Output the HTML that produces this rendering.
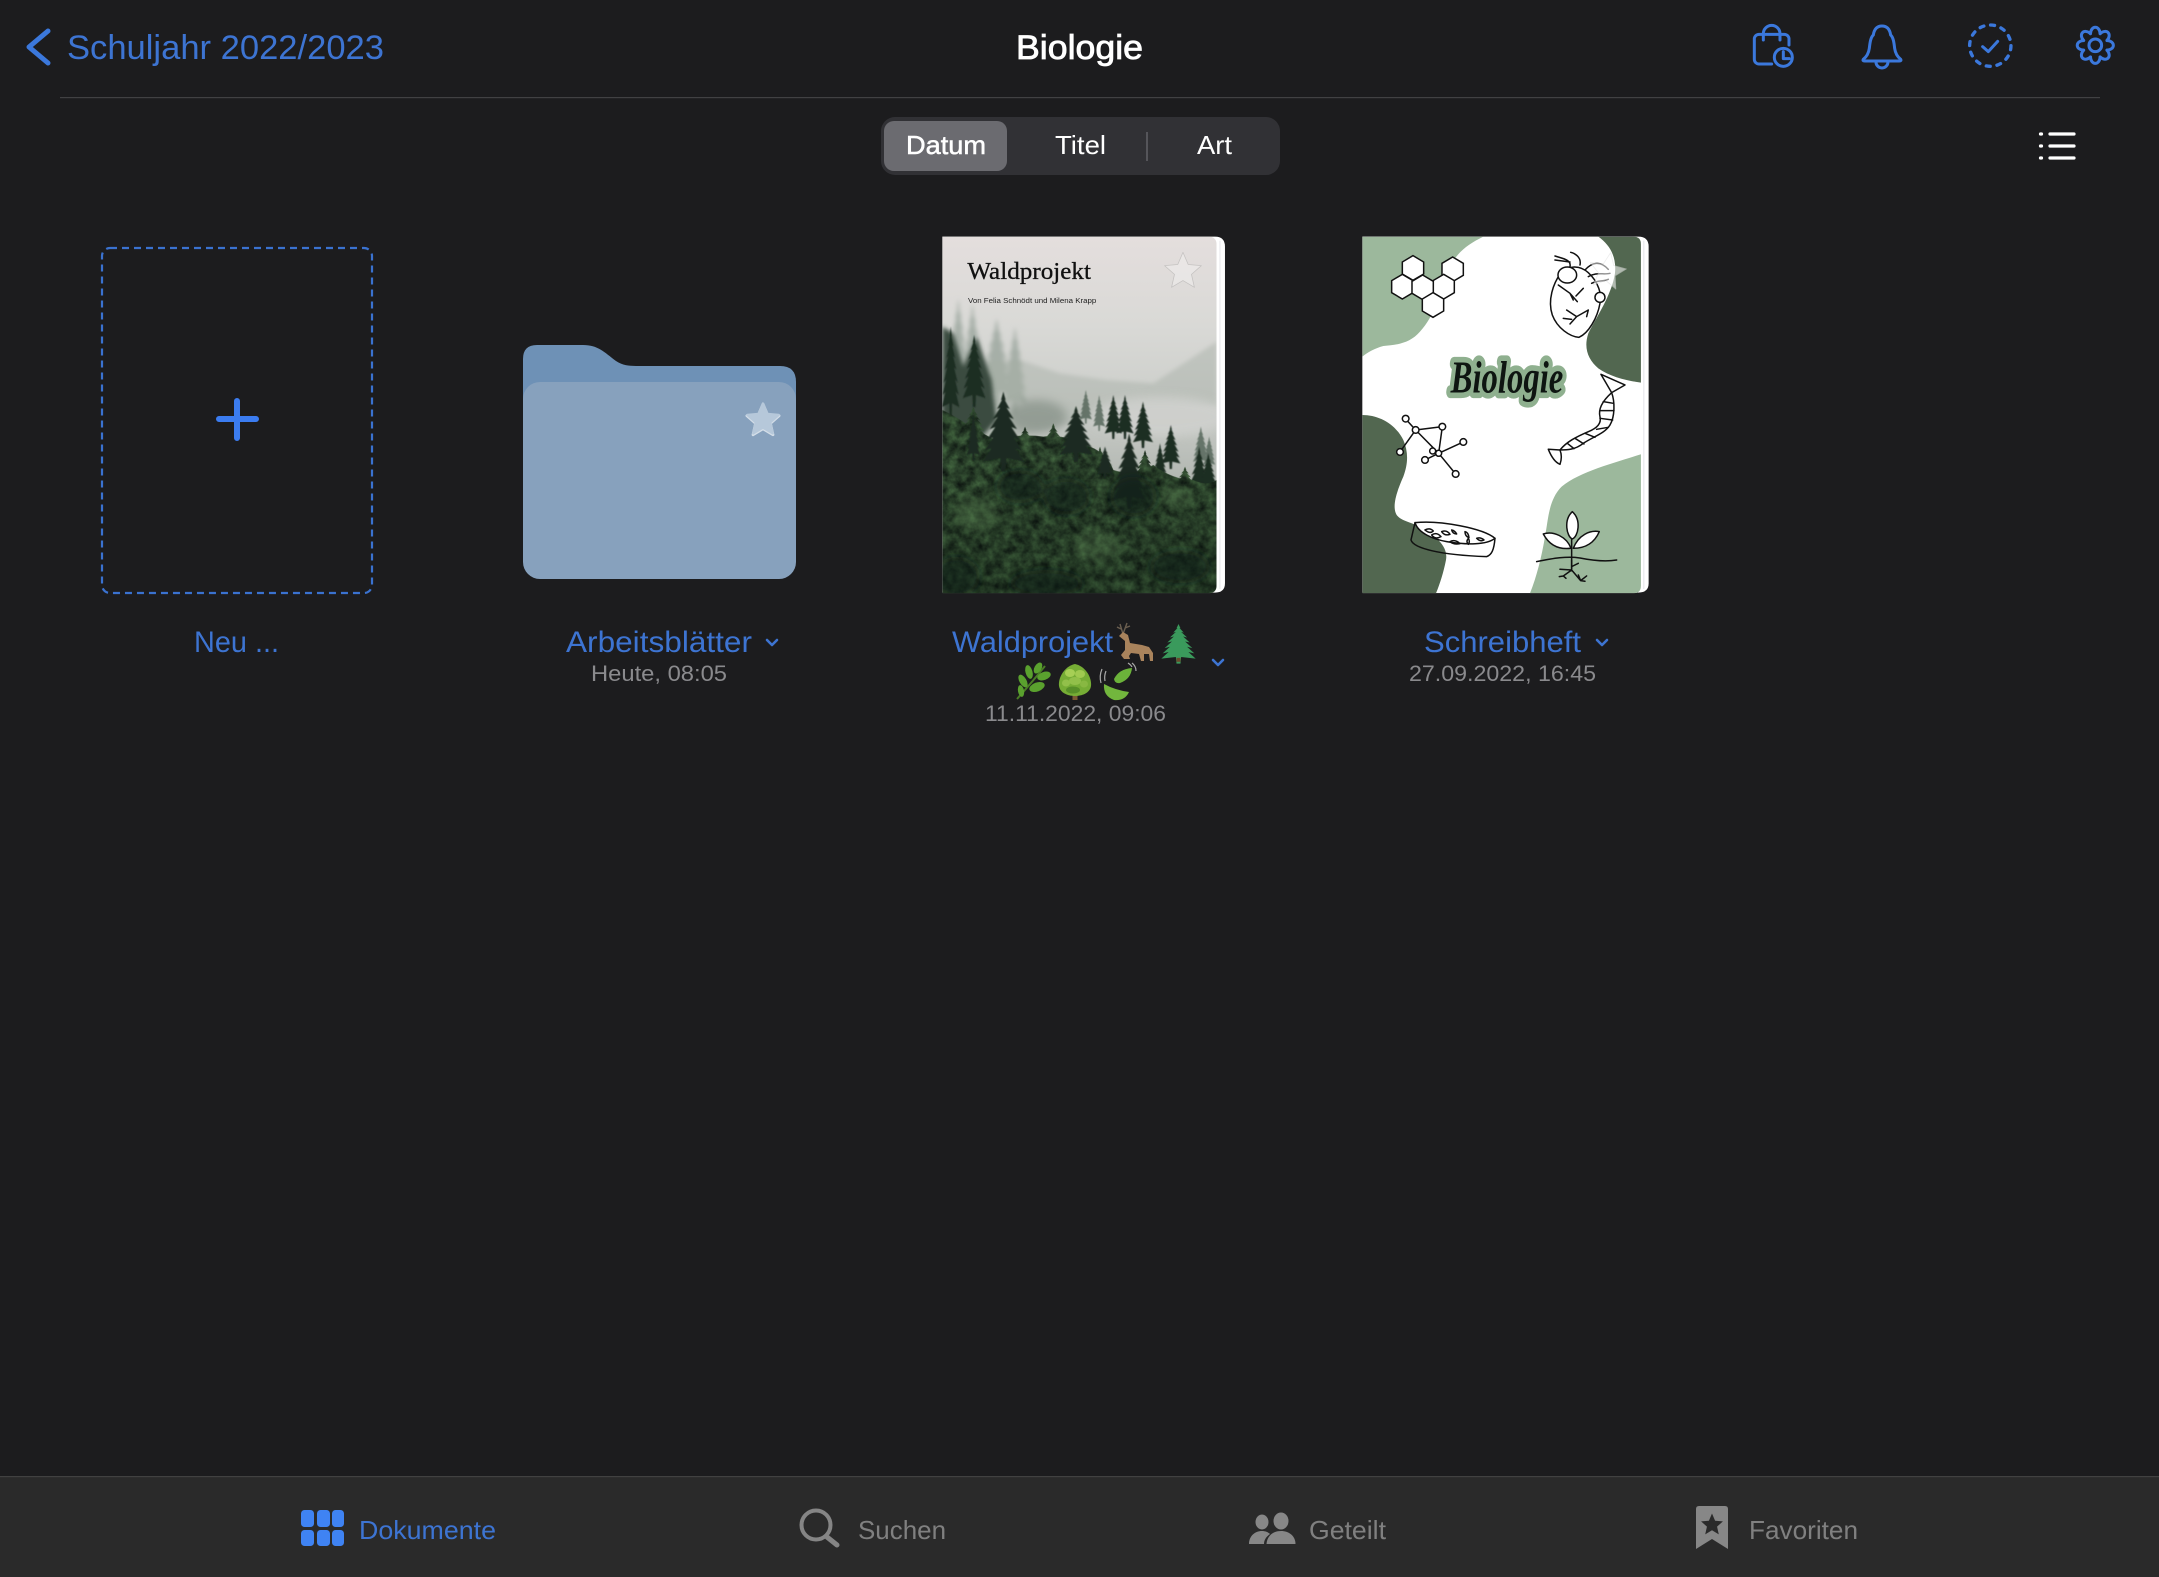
<!DOCTYPE html>
<html lang="de"><head><meta charset="utf-8"><title>Biologie</title>
<style>html,body{margin:0;padding:0;background:#1c1c1e;width:2159px;height:1577px;overflow:hidden}svg{display:block}text{font-family:"Liberation Sans",sans-serif}</style></head>
<body>
<svg xmlns="http://www.w3.org/2000/svg" width="2159" height="1577" viewBox="0 0 2159 1577">
<defs>
<path id="star" d="M0,-100 L27,-37 95,-31 44,14 59,81 0,46 -59,81 -44,14 -95,-31 -27,-37Z" stroke-linejoin="round"/>
<path id="lobe" d="M-14.500,-35 C-12.900,-60.600 12.900,-60.600 14.500,-35" fill="none" stroke-linecap="round"/>
<path id="con" d="M50,0 L56,26 L53,24 L66,52 L58,48 L76,82 L64,76 L84,112 L70,106 L92,146 L76,138 L98,178 L80,170 L102,210 L58,200 L56,240 L44,240 L42,200 L-2,210 L20,170 L2,178 L24,138 L8,146 L30,106 L16,112 L36,76 L24,82 L42,48 L34,52 L47,24 L44,26Z"/>
<polygon id="hex" points="0,-37 32,-18 32,18 0,37 -32,18 -32,-18" fill="#fff" stroke="#111" stroke-width="4.500"/>
<filter id="fol" x="0" y="0" width="1" height="1" color-interpolation-filters="sRGB"><feTurbulence type="fractalNoise" baseFrequency=".036" numOctaves="4" seed="7"/><feColorMatrix values=".32 0 0 0 .01  .48 0 0 0 .02  .28 0 0 0 .03  0 0 0 0 1"/><feComposite operator="in" in2="SourceAlpha"/></filter>
<filter id="b6" x="-30%" y="-30%" width="160%" height="160%"><feGaussianBlur stdDeviation="6"/></filter>
<filter id="b14" x="-50%" y="-50%" width="200%" height="200%"><feGaussianBlur stdDeviation="14"/></filter>
<filter id="b2" x="-10%" y="-10%" width="120%" height="120%"><feGaussianBlur stdDeviation="1.5"/></filter>
<linearGradient id="sky" x1="0" y1="0" x2="0" y2="1"><stop offset="0" stop-color="#e4dedd"/><stop offset=".25" stop-color="#d9d9d6"/><stop offset=".45" stop-color="#cdcfcb"/><stop offset=".6" stop-color="#bcc0bb"/><stop offset="1" stop-color="#8a948b"/></linearGradient>
<linearGradient id="shade" gradientUnits="userSpaceOnUse" x1="0" y1="640" x2="0" y2="1120"><stop offset="0" stop-color="#0e1a10" stop-opacity=".05"/><stop offset="1" stop-color="#0c1a0f" stop-opacity=".3"/></linearGradient>
<clipPath id="cw"><path d="M67,50 H865 Q890,50 890,75 V1095 Q890,1120 865,1120 H67Z"/></clipPath>
<clipPath id="cb"><path d="M67,50 H880 Q903,50 903,73 V1097 Q903,1120 880,1120 H67Z"/></clipPath>
</defs>
<rect width="2159" height="1577" fill="#1c1c1e"/>

<!-- header -->
<path d="M48,31 L29,47 L48,63" fill="none" stroke="#3b78dc" stroke-width="5" stroke-linecap="round" stroke-linejoin="round"/>
<text x="67" y="59" font-size="34" fill="#3d74d2" textLength="317" lengthAdjust="spacingAndGlyphs">Schuljahr 2022/2023</text>
<text x="1016" y="59" font-size="34" fill="#fff" stroke="#fff" stroke-width=".8" textLength="127" lengthAdjust="spacingAndGlyphs">Biologie</text>
<rect x="60" y="97" width="2040" height="1.2" fill="#414143"/>

<g transform="translate(1700,0) scale(.3333)" fill="none" stroke="#3b78dc" stroke-width="9" stroke-linecap="round" stroke-linejoin="round">
<path d="M215,192 H177 a14,14 0 0 1 -14,-14 V117 a14,14 0 0 1 14,-14 H253 a14,14 0 0 1 14,14 V135"/>
<path d="M190,120 V101 a25,25 0 0 1 50,0 V120"/>
<circle cx="250" cy="172" r="27"/><path d="M250,155 V176 H268"/>
<path d="M546,78 C528,78 522,92 520,105 C512,112 510,128 508,145 C506,160 500,170 490,178 Q487,183 494,183 H598 Q605,183 602,178 C592,170 586,160 584,145 C582,128 580,112 572,105 C570,92 564,78 546,78 Z"/>
<path d="M528,186 a18,18 0 0 0 36,0"/>
<circle cx="871" cy="137" r="62" stroke-dasharray="12 20.500" stroke-width="10"/>
<path d="M848,140 L865,155 L893,124"/>
<g transform="translate(1186,136)"><use href="#lobe"/><use href="#lobe" transform="rotate(45)"/><use href="#lobe" transform="rotate(90)"/><use href="#lobe" transform="rotate(135)"/><use href="#lobe" transform="rotate(180)"/><use href="#lobe" transform="rotate(225)"/><use href="#lobe" transform="rotate(270)"/><use href="#lobe" transform="rotate(315)"/><circle r="19"/></g>
</g>

<!-- segmented -->
<rect x="881" y="117" width="399" height="58" rx="14" fill="#313135"/>
<rect x="884" y="121" width="123" height="50" rx="10" fill="#6b6b70"/>
<text x="906" y="154" font-size="26" fill="#fff" stroke="#fff" stroke-width=".5" textLength="80" lengthAdjust="spacingAndGlyphs">Datum</text>
<text x="1055" y="154" font-size="26" fill="#fff" textLength="51" lengthAdjust="spacingAndGlyphs">Titel</text>
<text x="1197" y="154" font-size="26" fill="#fff" textLength="35" lengthAdjust="spacingAndGlyphs">Art</text>
<rect x="1146" y="132" width="2" height="29" fill="#55555a"/>
<g stroke="#fff" stroke-width="3.200" stroke-linecap="round"><path d="M2050,134 H2074 M2050,146 H2074 M2050,158 H2074"/><path d="M2040.500,134 H2041.500 M2040.500,146 H2041.500 M2040.500,158 H2041.500"/></g>

<!-- new doc -->
<rect x="102" y="248" width="270" height="345" rx="8" fill="none" stroke="#3a72d0" stroke-width="2.200" stroke-dasharray="7 5"/>
<path d="M237,401 V438 M219,419 H256" stroke="#3b7cf0" stroke-width="6" stroke-linecap="round"/>
<text x="194" y="652" font-size="30" fill="#3d74d2" textLength="85" lengthAdjust="spacingAndGlyphs">Neu ...</text>

<!-- folder -->
<path d="M537,345 H583 C598,345 604,352 616,361 C624,366 630,366 640,366 H780 Q796,366 796,382 V420 H523 V359 Q523,345 537,345Z" fill="#6e91b6"/>
<rect x="523" y="382" width="273" height="197" rx="17" fill="#87a1bd"/>
<use href="#star" transform="translate(763,421) scale(.17)" fill="#d4dee8" stroke="#d4dee8" stroke-width="16" filter="url(#b2)"/>
<use href="#star" transform="translate(763,420) scale(.165)" fill="#b6c8da" stroke="#b6c8da" stroke-width="14"/>
<text x="566" y="652" font-size="30" fill="#3d74d2" textLength="186" lengthAdjust="spacingAndGlyphs">Arbeitsblätter</text>
<path d="M767,640 L772,645 L777,640" fill="none" stroke="#3d74d2" stroke-width="2.600" stroke-linecap="round" stroke-linejoin="round"/>
<text x="591" y="681" font-size="22" fill="#8a8a8d" textLength="136" lengthAdjust="spacingAndGlyphs">Heute, 08:05</text>

<!-- Waldprojekt cover -->
<g transform="translate(920,220) scale(.3333)">
<path d="M67,50 H885 Q915,50 915,80 V1090 Q915,1118 885,1118 H67Z" fill="#fff"/>
<rect x="899" y="62" width="2" height="1045" fill="#dcdce2"/>
<g clip-path="url(#cw)">
<rect x="67" y="50" width="823" height="1070" fill="url(#sky)"/>
<!-- haze -->
<g fill="#a6afa7" filter="url(#b6)">
<use href="#con" transform="translate(85,235) scale(.6,1.2)"/><use href="#con" transform="translate(125,250) scale(.65,1.2)"/><use href="#con" transform="translate(185,295) scale(.9,1.1)"/><use href="#con" transform="translate(250,320) scale(.7,1.1)"/>
<path d="M67,420 L300,420 L420,460 L560,480 L700,490 L890,365 V560 L700,560 L500,600 L67,700Z" opacity=".45"/>
</g>
<!-- distant grey-green tree masses in fog -->
<g fill="#6f7d72" opacity=".5" filter="url(#b14)"><ellipse cx="350" cy="590" rx="90" ry="50"/></g>
<ellipse cx="720" cy="590" rx="210" ry="60" fill="#cfd0cd" filter="url(#b14)" opacity=".9"/>
<!-- left side undergrowth -->
<g fill="#3a4c40" filter="url(#b6)">
<path d="M67,320 L100,340 L130,440 L170,350 L215,480 L230,600 L160,680 L67,680Z"/>
</g>
<g fill="#55665a" filter="url(#b2)" opacity=".85">
<use href="#con" transform="translate(480,510) scale(.35,.42)"/><use href="#con" transform="translate(520,525) scale(.35,.45)"/><use href="#con" transform="translate(820,620) scale(.45,.5)"/><use href="#con" transform="translate(850,650) scale(.35,.4)"/>
</g>
<!-- mid conifers behind the mass -->
<g fill="#1f2d24" filter="url(#b2)">
<use href="#con" transform="translate(67,320) scale(.5,1.15)"/><use href="#con" transform="translate(130,345) scale(.65,.9)"/>
<use href="#con" transform="translate(555,525) scale(.5,.55)"/><use href="#con" transform="translate(590,525) scale(.5,.55)"/><use href="#con" transform="translate(640,545) scale(.58,.58)"/>
<use href="#con" transform="translate(725,615) scale(.55,.55)"/><use href="#con" transform="translate(805,680) scale(.65,.75)"/><use href="#con" transform="translate(700,670) scale(.4,.5)"/><use href="#con" transform="translate(840,700) scale(.5,.5)"/>
</g>
<!-- foliage mass with jagged tree tops -->
<g filter="url(#fol)">
<path d="M67,570 Q110,590 150,620 Q190,640 225,660 Q300,640 370,650 Q430,640 510,680 Q560,700 580,750 Q640,770 700,735 Q760,780 820,780 Q860,800 890,780 V1120 H67Z"/>
<use href="#con" transform="translate(360,610) scale(.8,.5)"/><use href="#con" transform="translate(280,620) scale(.7,.4)"/><use href="#con" transform="translate(510,680) scale(.6,.45)"/><use href="#con" transform="translate(640,690) scale(.7,.5)"/><use href="#con" transform="translate(760,740) scale(.7,.4)"/><use href="#con" transform="translate(120,560) scale(.8,.5)"/>
</g>
<path d="M67,570 Q110,590 150,620 Q190,640 225,660 Q300,640 370,650 Q430,640 510,680 Q560,700 580,750 Q640,770 700,735 Q760,780 820,780 Q860,800 890,780 V1120 H67Z" fill="url(#shade)"/>
<!-- foreground conifers -->
<g fill="#1b2a20" filter="url(#b2)">
<use href="#con" transform="translate(190,515) scale(1.2,1)"/><use href="#con" transform="translate(418,558) scale(1,.7)"/><use href="#con" transform="translate(530,680) scale(.5,.4)"/><use href="#con" transform="translate(580,640) scale(.95,.95)"/><use href="#con" transform="translate(140,580) scale(.4,.6)"/>
</g>
<g fill="#5d8455" opacity=".35" filter="url(#b14)"><ellipse cx="530" cy="980" rx="70" ry="45"/><ellipse cx="770" cy="830" rx="50" ry="30"/><ellipse cx="170" cy="880" rx="70" ry="50"/></g>
<g fill="#0f1c12" opacity=".55" filter="url(#b14)"><ellipse cx="440" cy="830" rx="70" ry="55"/><ellipse cx="110" cy="1070" rx="70" ry="60"/><ellipse cx="640" cy="830" rx="70" ry="60"/><ellipse cx="380" cy="1090" rx="110" ry="40"/><ellipse cx="780" cy="1040" rx="90" ry="50"/><ellipse cx="300" cy="800" rx="70" ry="50"/></g>
</g>
<text x="142" y="177" style="font-family:'Liberation Serif',serif" font-size="74" fill="#111" stroke="#111" stroke-width=".9" textLength="371" lengthAdjust="spacingAndGlyphs">Waldprojekt</text>
<text x="144" y="249" font-size="22" fill="#222" textLength="385" lengthAdjust="spacingAndGlyphs">Von Felia Schnödt und Milena Krapp</text>
<use href="#star" transform="translate(789,155) scale(.58)" fill="#fff" opacity=".3" stroke="#888" stroke-width="4"/>
</g>
<text x="952" y="652" font-size="30" fill="#3d74d2" textLength="161" lengthAdjust="spacingAndGlyphs">Waldprojekt</text>
<!-- emoji drawn as small pictures -->
<g>
<title>🦌🌲🌿🌳🍃</title>
<g transform="translate(1116,623)"><path d="M7,11 L4,1 M7,11 L11,0 M5,6 L1,4 M9,5 L14,3" stroke="#6b5f50" stroke-width="1.400" fill="none"/><path d="M3,13 L7,9 L12,12 L14,20 L26,22 L33,24 L37,30 L37,38 L34,38 L33,31 L28,31 L28,38 L25,38 L23,31 L15,30 L13,33 L14,36 L8,36 L5,32 L9,27 L9,18Z" fill="#a9835c"/></g>
<g transform="translate(1162,624) scale(.33,.165)" fill="#3a9a5c"><use href="#con"/><rect x="44" y="205" width="12" height="24" fill="#6a4a2c"/></g>
<g transform="translate(1015,663)" fill="#5aa12e" stroke-linejoin="round"><path d="M2,36 Q18,18 30,3" stroke="#4a7d25" stroke-width="2" fill="none"/><ellipse cx="23" cy="5" rx="3.500" ry="6" transform="rotate(30 23 5)"/><ellipse cx="14" cy="9" rx="3.500" ry="7" transform="rotate(-15 14 9)"/><ellipse cx="29" cy="13" rx="4" ry="7" transform="rotate(70 29 13)"/><ellipse cx="8" cy="18" rx="3.500" ry="7" transform="rotate(-30 8 18)"/><ellipse cx="22" cy="24" rx="4.500" ry="8" transform="rotate(70 22 24)"/><ellipse cx="6" cy="28" rx="3" ry="6" transform="rotate(-10 6 28)"/></g>
<g transform="translate(1058,663)"><rect x="14.500" y="30" width="5" height="7" fill="#7b5a32"/><path d="M17,1 C27,3 34,14 33,23 C32,30 24,33 17,33 C10,33 2,30 1,23 C0,14 7,3 17,1Z" fill="#76ad35"/><ellipse cx="12" cy="10" rx="5" ry="4" fill="#a6cf55"/><ellipse cx="22" cy="11" rx="5" ry="4" fill="#a0ca50"/><ellipse cx="17" cy="18" rx="6" ry="4" fill="#92c04a"/><ellipse cx="8" cy="20" rx="4" ry="3.500" fill="#92c04a"/><ellipse cx="26" cy="21" rx="4" ry="3.500" fill="#88b842"/><ellipse cx="15" cy="27" rx="7" ry="3.500" fill="#578f28"/></g>
<g transform="translate(1099,663)"><path d="M15,16 Q20,6 33,5 Q32,16 21,20Q16,21 15,16Z" fill="#6bb23a"/><path d="M5,21 Q4,33 15,37 Q26,38 30,29 Q16,27 5,21Z" fill="#72b63d"/><path d="M3,6 Q0,13 2,20 M7,8 Q5,13 6,18 M33,0 Q37,3 37,8 M29,0 Q32,2 33,4" stroke="#aaa" stroke-width="1.200" fill="none"/></g>
</g>
<path d="M1213,660 L1218,665 L1223,660" fill="none" stroke="#3d74d2" stroke-width="2.600" stroke-linecap="round" stroke-linejoin="round"/>
<text x="985" y="721" font-size="22" fill="#8a8a8d" textLength="181" lengthAdjust="spacingAndGlyphs">11.11.2022, 09:06</text>

<!-- Biologie cover -->
<g transform="translate(1340,220) scale(.3333)">
<path d="M67,50 H895 Q926,50 926,80 V1090 Q926,1118 895,1118 H67Z" fill="#fff"/>
<rect x="910" y="62" width="3" height="1045" fill="#e3e4ea"/>
<g clip-path="url(#cb)">
<rect x="67" y="50" width="836" height="1070" fill="#fff"/>
<path d="M67,50 H430 C380,75 345,100 320,160 C295,230 285,285 240,335 C210,370 170,375 130,378 C105,385 85,395 67,410Z" fill="#9cb89c"/>
<path d="M775,50 C810,75 830,110 825,160 C815,225 770,290 745,340 C730,385 745,420 775,445 C810,470 860,482 903,488 V50Z" fill="#526750"/>
<path d="M67,585 C115,585 165,610 190,660 C205,695 205,730 190,770 C170,815 155,860 170,885 C185,905 215,905 245,925 C290,950 325,980 318,1020 C310,1060 300,1090 288,1120 H67Z" fill="#526750"/>
<path d="M903,703 C820,730 720,755 665,800 C625,840 625,900 615,950 C605,1010 590,1070 570,1120 H903Z" fill="#9cb89c"/>
</g>
<text x="332" y="518" style="font-family:'Liberation Serif',serif;font-style:italic;font-weight:bold;paint-order:stroke" font-size="136" fill="#0e1511" stroke="#8fb08f" stroke-width="34" stroke-linejoin="round" textLength="338" lengthAdjust="spacingAndGlyphs">Biologie</text>
<use href="#hex" x="219" y="144"/><use href="#hex" x="338" y="148"/><use href="#hex" x="187" y="200"/><use href="#hex" x="311" y="200"/><use href="#hex" x="248" y="202"/><use href="#hex" x="279" y="255"/>
<g fill="none" stroke="#111" stroke-width="4.500" stroke-linejoin="round" stroke-linecap="round">
<path d="M662,160 C640,190 622,240 637,285 C652,325 690,350 717,352 C745,340 772,295 780,250 C787,225 775,185 745,158 C720,135 685,135 662,160Z" fill="#fff"/>
<ellipse cx="682" cy="165" rx="28" ry="24" fill="#fff"/>
<path d="M690,140 C695,118 665,115 645,108 M645,120 L690,126 M720,135 C725,112 705,100 692,97 M735,150 C755,128 780,120 805,148 M745,170 C770,155 790,165 810,160 M755,190 C775,180 790,185 805,178"/>
<circle cx="780" cy="232" r="15" fill="#fff"/>
<path d="M655,195 L690,220 L712,245 M690,220 L700,240 M730,205 L708,228 M680,270 L710,290 L745,270 M710,290 L690,312 M670,295 L695,298 M740,290 L745,270"/>
<line x1="227" y1="630" x2="197" y2="597"/><line x1="227" y1="630" x2="307" y2="620"/><line x1="227" y1="630" x2="180" y2="696"/><line x1="227" y1="630" x2="296" y2="700"/><line x1="307" y1="620" x2="296" y2="700"/><line x1="296" y1="700" x2="370" y2="666"/><line x1="296" y1="700" x2="255" y2="720"/><line x1="296" y1="700" x2="347" y2="762"/>
<g fill="#fff"><circle cx="197" cy="596" r="10"/><circle cx="227" cy="630" r="10"/><circle cx="307" cy="620" r="10"/><circle cx="370" cy="666" r="10"/><circle cx="278" cy="693" r="9"/><circle cx="296" cy="700" r="9"/><circle cx="255" cy="720" r="10"/><circle cx="347" cy="762" r="10"/><circle cx="180" cy="696" r="10"/></g>
<path d="M815,518 L783,463 L855,495Z"/>
<path d="M815,518 C785,545 775,570 780,590 C785,610 770,625 745,635 C710,650 680,665 660,690"/>
<path d="M815,518 C825,545 825,590 810,615 C795,640 760,650 730,670 C705,690 680,690 660,690"/>
<path d="M660,690 L625,688 Q640,725 660,733 Q668,710 660,690Z"/>
<path d="M790,545 L820,550 M780,572 L822,572 M780,595 L818,600 M770,628 L805,622 M735,640 L765,652 M705,655 L732,672 M682,670 L702,686"/>
<path d="M225,908 C300,900 430,925 465,955 C440,975 380,975 320,965 C280,958 235,940 225,908Z" fill="#fff"/>
<path d="M225,908 L213,960 C220,985 300,1005 440,1010 C455,1005 462,990 465,955"/>
<path d="M255,930 q15,-8 25,3 q-10,10 -25,-3 M275,945 q15,-10 28,5 q-18,10 -28,-5 M305,935 q15,-6 25,8 q-15,6 -25,-8 M335,930 q10,2 15,12 q-12,0 -15,-12 M330,965 q15,-8 30,6 q-18,4 -30,-6 M375,935 q10,2 12,18 q-12,-4 -12,-18 M385,955 q6,10 0,18 q-8,-8 0,-18 M410,955 q12,-4 22,5 q-12,6 -22,-5"/>
<path d="M695,940 L695,1045"/>
<path d="M697,875 C670,900 680,950 697,957 C715,950 725,900 697,875Z" fill="#fff"/>
<path d="M610,942 C640,932 680,950 693,985 C650,990 625,970 610,942Z" fill="#fff"/>
<path d="M778,935 C750,930 715,945 700,985 C740,985 765,965 778,935Z" fill="#fff"/>
<path d="M590,1025 C640,1015 680,1008 720,1014 C760,1022 800,1025 830,1020"/>
<path d="M695,1020 L695,1050 L660,1048 M695,1050 L670,1068 L678,1075 M670,1068 L658,1070 M695,1050 L722,1082 L740,1068 M722,1082 L715,1065 M722,1082 L735,1084 M695,1040 L715,1030"/>
</g>
<use href="#star" transform="translate(802,155) rotate(10) scale(.58)" fill="#fff" opacity=".55" stroke="#ddd" stroke-width="4"/>
</g>
<text x="1424" y="652" font-size="30" fill="#3d74d2" textLength="157" lengthAdjust="spacingAndGlyphs">Schreibheft</text>
<path d="M1597,640 L1602,645 L1607,640" fill="none" stroke="#3d74d2" stroke-width="2.600" stroke-linecap="round" stroke-linejoin="round"/>
<text x="1409" y="681" font-size="22" fill="#8a8a8d" textLength="187" lengthAdjust="spacingAndGlyphs">27.09.2022, 16:45</text>

<!-- tab bar -->
<rect x="0" y="1476" width="2159" height="101" fill="#2a2a2a"/>
<rect x="0" y="1476" width="2159" height="1.2" fill="#414141"/>
<g fill="#3f83f3"><rect x="301" y="1510" width="13" height="17" rx="3.500"/><rect x="317" y="1510" width="13" height="17" rx="3.500"/><rect x="332" y="1510" width="12" height="17" rx="3.500"/><rect x="301" y="1530" width="13" height="16" rx="3.500"/><rect x="317" y="1530" width="13" height="16" rx="3.500"/><rect x="332" y="1530" width="12" height="16" rx="3.500"/></g>
<text x="359" y="1539" font-size="26" fill="#3d74d2" textLength="137" lengthAdjust="spacingAndGlyphs">Dokumente</text>
<circle cx="816" cy="1525" r="14.500" fill="none" stroke="#858585" stroke-width="4"/>
<path d="M827,1537 L837,1545" stroke="#858585" stroke-width="5" stroke-linecap="round"/>
<text x="858" y="1539" font-size="26" fill="#808080" textLength="88" lengthAdjust="spacingAndGlyphs">Suchen</text>
<g fill="#878787"><ellipse cx="1262" cy="1522" rx="6.500" ry="7.500"/><ellipse cx="1281" cy="1521" rx="7.500" ry="8.500"/><path d="M1249,1544 C1249,1536 1255,1531 1262,1531 C1265,1531 1268,1532 1270,1534 C1266,1537 1264,1540 1264,1544Z"/><path d="M1266.500,1544 C1267,1536 1273,1531 1281,1531 C1289,1531 1295.500,1536 1295.500,1544Z"/></g>
<text x="1309" y="1539" font-size="26" fill="#808080" textLength="77" lengthAdjust="spacingAndGlyphs">Geteilt</text>
<path d="M1699,1506 H1725 Q1728,1506 1728,1509 V1549 L1712,1539 L1696,1549 V1509 Q1696,1506 1699,1506Z" fill="#878787"/>
<use href="#star" transform="translate(1712,1525) scale(.115)" fill="#2a2a2a"/>
<text x="1749" y="1539" font-size="26" fill="#808080" textLength="109" lengthAdjust="spacingAndGlyphs">Favoriten</text>
</svg>
</body></html>
